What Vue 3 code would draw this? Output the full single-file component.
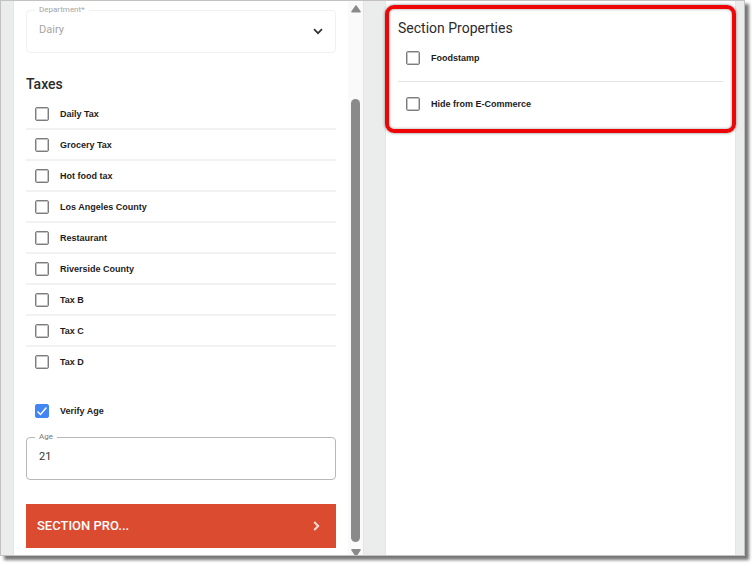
<script setup>
import { ref } from 'vue'

const taxes = ref([
  'Daily Tax', 'Grocery Tax', 'Hot food tax', 'Los Angeles County', 'Restaurant',
  'Riverside County', 'Tax B', 'Tax C', 'Tax D',
].map((name) => ({ name, checked: false })))
const verifyAge = ref(true)
const age = ref('21')
const foodstamp = ref(false)
const hideOnline = ref(false)
</script>

<template>
  <main class="window">
    <section class="panel main-panel">
      <form class="form" @submit.prevent>
        <fieldset class="field muted">
          <legend><label for="department">Department*</label></legend>
          <select id="department" disabled>
            <option>Dairy</option>
          </select>
          <svg class="chevron" viewBox="0 0 10 7" aria-hidden="true"><path d="M1 1.2 5 5.2 9 1.2" /></svg>
        </fieldset>

        <h2 class="taxes-title">Taxes</h2>
        <ul class="taxes">
          <li v-for="tax in taxes" :key="tax.name">
            <label class="check"><input v-model="tax.checked" type="checkbox"><span>{{ tax.name }}</span></label>
          </li>
        </ul>

        <label class="check verify"><input v-model="verifyAge" type="checkbox"><span>Verify Age</span></label>

        <fieldset class="field">
          <legend><label for="age">Age</label></legend>
          <input id="age" v-model="age" type="text">
        </fieldset>

        <button class="section-button" type="button">
          <span>SECTION PRO...</span>
          <svg viewBox="0 0 7 10" aria-hidden="true"><path d="M1.2 1 5.2 5 1.2 9" /></svg>
        </button>
      </form>

      <div class="scrollbar" aria-hidden="true">
        <svg viewBox="0 0 10 8"><path d="M4.4.5Q5 0 5.6.5L9.8 6.6Q10 7.5 9 7.5H1Q0 7.5.2 6.6Z" /></svg>
        <div class="thumb"></div>
        <svg class="down" viewBox="0 0 10 6"><path d="M1 0H9Q10 .2 9.8 1L6.5 6H3.5L.2 1Q0 .2 1 0Z" /></svg>
      </div>
    </section>

    <section class="panel">
      <div class="properties">
        <h2>Section Properties</h2>
        <label class="check"><input v-model="foodstamp" type="checkbox"><span>Foodstamp</span></label>
        <hr>
        <label class="check"><input v-model="hideOnline" type="checkbox"><span>Hide from E-Commerce</span></label>
        <div class="highlight"></div>
      </div>
    </section>
  </main>
</template>

<style>
body {
  background: #fff;
}
</style>

<style scoped>
* {
  box-sizing: border-box;
}

.window {
  display: grid;
  grid-template-columns: 1fr 1fr;
  gap: 23px;
  margin: 0 10px 10px 0;
  padding: 0 9px 0 13px;
  border: 1px solid #c4c1c1;
  background: #ebedec;
  box-shadow: 4px 4px 3px #777;
  font-family: Roboto, sans-serif;
  color: #2b2b2b;
}

.panel {
  min-width: 0;
  background: #fff;
  box-shadow: 0 0 1px #c4c4c4;
}

.main-panel {
  display: flex;
}

.form {
  display: flex;
  flex: 1;
  flex-direction: column;
  min-width: 0;
  padding: 4px 12px 7px;
}

h2 {
  margin: 0;
  font-size: 14px;
  font-weight: 500;
  line-height: 20px;
}

.field {
  position: relative;
  height: 48px;
  margin: 0;
  padding: 6px 12px 0;
  border: 1px solid #b8b8b8;
  border-radius: 4px;
  min-width: 0;
}

.field legend {
  margin-left: -4px;
  padding: 0 4px;
  font-size: 8px;
  line-height: 10px;
  color: #777;
}

.field input,
.field select {
  display: block;
  width: 100%;
  height: 18px;
  margin: 0;
  padding: 0;
  border: 0;
  outline: 0;
  appearance: none;
  background: transparent;
  font: 11px/18px Roboto, sans-serif;
  color: #333;
}

.field.muted {
  border-color: #f1f1f1;
}

.field.muted legend,
.field.muted select {
  color: #a5a5a5;
  opacity: 1;
}

.chevron {
  position: absolute;
  top: 13px;
  right: 12px;
  width: 10px;
  height: 7px;
}

svg path {
  fill: none;
  stroke: #333;
  stroke-width: 1.7;
}

.taxes-title {
  margin-top: 21px;
}

.taxes {
  margin: 5px 0 0;
  padding: 0;
  list-style: none;
}

.taxes li {
  height: 31px;
  border-bottom: 2px solid #f2f2f2;
}

.taxes li:last-child {
  border-bottom: 0;
}

.check {
  display: flex;
  align-items: center;
  gap: 11px;
  height: 30px;
  padding-left: 9px;
  font: bold 9px/14px "Liberation Sans", Arial, sans-serif;
  color: #1c1c1c;
}

.check input {
  flex: none;
  width: 14px;
  height: 14px;
  margin: 0;
  appearance: none;
  border: 1px solid #7c7c7c;
  border-radius: 2px;
  background: #fff;
  box-shadow: inset 0 0 0 1px #c4c4c4;
}

.check input:checked {
  border-color: #4285f4;
  box-shadow: none;
  background: #4285f4 url("data:image/svg+xml,%3Csvg xmlns='http://www.w3.org/2000/svg' viewBox='0 0 10 10'%3E%3Cpath d='M.5 5.5 3.5 8.5 9.5 1.5' fill='none' stroke='white' stroke-width='1.5'/%3E%3C/svg%3E") center / 10px 10px no-repeat;
}

.verify {
  margin: 18px 0 6px;
}

.section-button {
  display: flex;
  align-items: center;
  justify-content: space-between;
  height: 44px;
  margin-top: 24px;
  padding: 0 16px 0 11px;
  border: 0;
  background: #db4b30;
  font: 500 13px/20px Roboto, sans-serif;
  color: #fff;
}

.section-button svg {
  width: 7px;
  height: 10px;
}

.section-button path {
  stroke: #f5dcd7;
  stroke-width: 2;
}

.scrollbar {
  display: flex;
  flex-direction: column;
  align-items: center;
  width: 15px;
  padding-top: 4px;
  background: #fafafa;
}

.scrollbar svg {
  width: 10px;
  height: 8px;
}

.scrollbar .down {
  height: 6px;
}

.scrollbar path {
  fill: #8a8a8a;
  stroke: none;
}

.thumb {
  flex: 1;
  width: 9px;
  margin: 86px 0 7px;
  border-radius: 5px;
  background: #8a8a8a;
}

.properties {
  position: relative;
  padding: 17px 12px 13px;
}

.properties h2 {
  margin-bottom: 5px;
  font-weight: 400;
}

.properties .check {
  padding-left: 8px;
}

.properties hr {
  height: 1px;
  margin: 8px 0 7px;
  border: 0;
  background: #e3e3e3;
}

.highlight {
  position: absolute;
  inset: 4px -1px -1px;
  border: 4px solid #ee0505;
  border-radius: 9px;
  box-shadow: 0 0 3px #777, inset 0 0 3px #999;
  pointer-events: none;
}
</style>
